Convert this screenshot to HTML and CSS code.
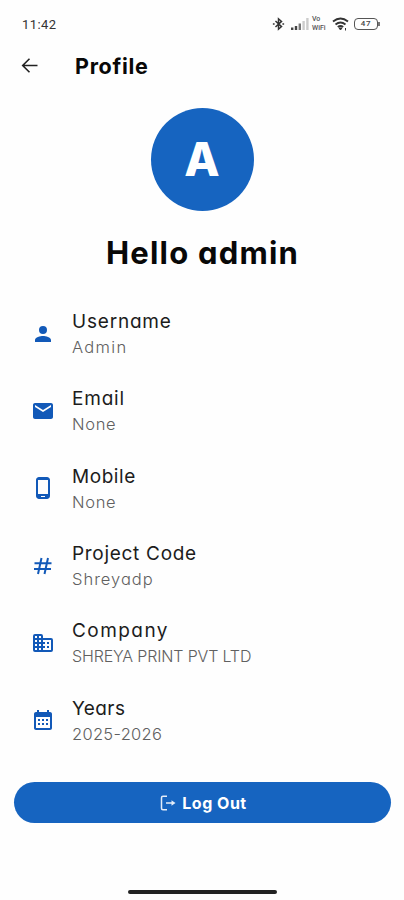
FILE: index.html
```html
<!DOCTYPE html>
<html lang="en">
<head>
<meta charset="utf-8">
<meta name="viewport" content="width=device-width, initial-scale=1">
<title>Profile</title>
<link rel="stylesheet" href="styles.css">
</head>
<body>
<div class="screen">
  <div class="status">
    <span class="clock">11:42</span>
    <div class="indicators">
      <svg width="13" height="14" viewBox="0 0 15 16" fill="none" stroke="#333" stroke-width="1.7"><path d="M4 4.5l7 6.5-3.5 3V2L11 5l-7 6.5"/><path d="M1 8h2M12 8h2" stroke-width="2"/></svg>
      <svg class="signal" width="18" height="12" viewBox="0 0 18 12"><path d="M0 9.5h2.4V12H0zM3.8 8h2.4v4H3.8z" fill="#444"/><path d="M7.6 5.5H10V12H7.6z" fill="#777"/><path d="M11.4 3h2.4v9h-2.4zM15.2 0h2.4v12h-2.4z" fill="#ccc"/></svg>
      <div class="vowifi"><span>Vo</span><span>WiFi</span></div>
      <svg class="wifi" width="17" height="14" viewBox="0 0 17 14" fill="none" stroke="#333" stroke-width="1.9"><path d="M1 4.4Q8.5-1.6 16 4.4M3.5 7.4q5-4 10 0M5.8 10q2.7-2 5.4 0"/><path d="M7 11h3l-1.5 2zM13.5 11v2.5" fill="#333" stroke-width="1"/></svg>
      <div class="battery">47</div>
    </div>
  </div>

  <header class="appbar">
    <svg width="18" height="16" viewBox="0 0 18 16" fill="none" stroke="#222" stroke-width="1.6"><path d="M16.5 7.5H2M8.5 .7L1.7 7.5l6.8 6.8"/></svg>
    <h1>Profile</h1>
  </header>

  <div class="avatar">A</div>
  <h2>Hello admin</h2>

  <ul class="details">
    <li>
      <svg viewBox="0 0 24 24"><path d="M12 12a4 4 0 1 0 0-8 4 4 0 0 0 0 8zm0 2c-2.67 0-8 1.34-8 4v2h16v-2c0-2.66-5.33-4-8-4z"/></svg>
      <div><p class="label l-user">Username</p><p class="value v-admin">Admin</p></div>
    </li>
    <li>
      <svg viewBox="0 0 24 24"><path d="M20 4H4c-1.1 0-2 .9-2 2v12c0 1.1.9 2 2 2h16c1.1 0 2-.9 2-2V6c0-1.1-.9-2-2-2zm0 4l-8 5-8-5V6l8 5 8-5v2z"/></svg>
      <div><p class="label l-email">Email</p><p class="value v-none">None</p></div>
    </li>
    <li>
      <svg viewBox="0 0 24 24"><path d="M16 1H8C6.34 1 5 2.34 5 4v16c0 1.66 1.34 3 3 3h8c1.66 0 3-1.34 3-3V4c0-1.66-1.34-3-3-3zm-2 20h-4v-1h4v1zm3-3H7V4h10v14z"/></svg>
      <div><p class="label l-mobile">Mobile</p><p class="value v-none">None</p></div>
    </li>
    <li>
      <svg viewBox="0 0 24 24" class="hash"><path d="M3.5 9.3h17M3 15h17M10.5 4L7 20M17 4l-3.5 16"/></svg>
      <div><p class="label l-code">Project Code</p><p class="value v-code">Shreyadp</p></div>
    </li>
    <li>
      <svg viewBox="0 0 24 24"><path d="M12 7V5q0-2-2-2H4Q2 3 2 5v14q0 2 2 2h16q2 0 2-2V9q0-2-2-2H12zM6 19H4v-2h2v2zm0-4H4v-2h2v2zm0-4H4V9h2v2zm0-4H4V5h2v2zm4 12H8v-2h2v2zm0-4H8v-2h2v2zm0-4H8V9h2v2zm0-4H8V5h2v2zm10 12h-8v-2h2v-2h-2v-2h2v-2h-2V9h8v10zm-2-8h-2v2h2v-2zm0 4h-2v2h2v-2z"/></svg>
      <div><p class="label l-company">Company</p><p class="value v-company">SHREYA PRINT PVT LTD</p></div>
    </li>
    <li>
      <svg viewBox="0 0 24 24"><path d="M19 4h-1V2h-2v2H8V2H6v2H5c-1.1 0-2 .9-2 2v14c0 1.1.9 2 2 2h14c1.1 0 2-.9 2-2V6c0-1.1-.9-2-2-2zm0 16H5V9h14v11zM7 11h2v2H7zm4 0h2v2h-2zm4 0h2v2h-2zm-8 4h2v2H7zm4 0h2v2h-2zm4 0h2v2h-2z"/></svg>
      <div><p class="label l-years">Years</p><p class="value v-years">2025-2026</p></div>
    </li>
  </ul>

  <button class="logout" type="button">
    <svg width="16" height="16" viewBox="0 0 16 16" fill="none" stroke="#e3ecf8" stroke-width="1.5"><path d="M7 1.2H3Q1.5 1.2 1.5 2.7v10.6q0 1.5 1.5 1.5h4M6 8h7"/><path d="M11.5 5.2L15.5 8l-4 2.8z" fill="#e3ecf8" stroke="none"/></svg>
    <span>Log Out</span>
  </button>
  <div class="homebar"></div>
</div>
</body>
</html>
```
FILE: styles.css
```css
* { box-sizing: border-box; margin: 0; padding: 0; }
body {
  background: #fefefe;
  color: #080808;
  font-family: Inter, "Open Sans", sans-serif;
  font-feature-settings: "cv11" 1;
}
.screen { width: 404px; height: 900px; display: flex; flex-direction: column; overflow: hidden; }
.status { height: 48px; padding: 0 26px 0 22px; display: flex; justify-content: space-between; align-items: center; }
.clock { font: 400 13px Roboto, sans-serif; letter-spacing: 0.4px; color: #333; }
.indicators { display: flex; align-items: center; }
.signal { margin-left: 6px; }
.vowifi { margin-left: 3px; width: 16px; display: flex; flex-direction: column; font: 500 7px/9px Roboto, sans-serif; color: #555; }
.wifi { margin-left: 4px; }
.battery {
  position: relative; margin-left: 5px; width: 24px; height: 12px;
  border: 1px solid #555; border-radius: 4px;
  font: 500 8px/10px Roboto, sans-serif; letter-spacing: 0.8px; text-align: center; color: #444;
}
.battery::after { content: ""; position: absolute; right: -3px; top: 3px; width: 2px; height: 4px; background: #777; }
.appbar { height: 36px; padding-left: 21px; display: flex; align-items: center; gap: 36px; }
h1 { font-size: 21.5px; line-height: 30px; font-weight: 700; letter-spacing: 0.7px; }
.avatar {
  width: 103px; height: 103px; margin: 24px auto 0; padding-bottom: 2px; border-radius: 50%;
  display: flex; align-items: center; justify-content: center;
  background: #1664c0; color: #fff; font-size: 46px; font-weight: 800;
}
h2 { margin-top: 22px; height: 40px; line-height: 40px; font-size: 31px; font-weight: 700; letter-spacing: 1.2px; text-indent: 1px; text-align: center; white-space: nowrap; }
.details { list-style: none; margin-top: 22px; padding-left: 31px; }
.details li { height: 77.3px; display: flex; align-items: center; gap: 17px; }
.details svg { width: 24px; height: 24px; fill: #1259b8; }
.details .hash { fill: none; stroke: #1259b8; stroke-width: 2; }
.label { padding-top: 1px; font-size: 19px; line-height: 26px; font-weight: 400; color: #1c1c1c; white-space: nowrap; }
.value { font-size: 16.5px; line-height: 24px; font-weight: 300; color: #606060; white-space: nowrap; }
.l-user { letter-spacing: 0.8px; }
.l-email { letter-spacing: 0.8px; }
.l-mobile { letter-spacing: 0.55px; }
.l-code { letter-spacing: 0.7px; }
.l-company { letter-spacing: 1.45px; }
.l-years { letter-spacing: 0.4px; }
.v-admin { letter-spacing: 1.3px; }
.v-none { letter-spacing: 0.7px; }
.v-code { letter-spacing: 1px; }
.v-company { font-size: 16px; letter-spacing: -0.15px; }
.v-years { letter-spacing: 0.3px; }
.logout {
  margin: 23px 13px 0 14px; padding: 1px 0 0 2px; height: 41px; flex: none; border: 0; border-radius: 21px;
  display: flex; align-items: center; justify-content: center; gap: 6px;
  background: #1664c0; color: #fff; font: 700 16px/24px Inter, sans-serif; letter-spacing: 0.5px;
}
.homebar { margin: 67px 0 0 128px; width: 149px; height: 4px; flex: none; border-radius: 2px; background: #222; }
```
